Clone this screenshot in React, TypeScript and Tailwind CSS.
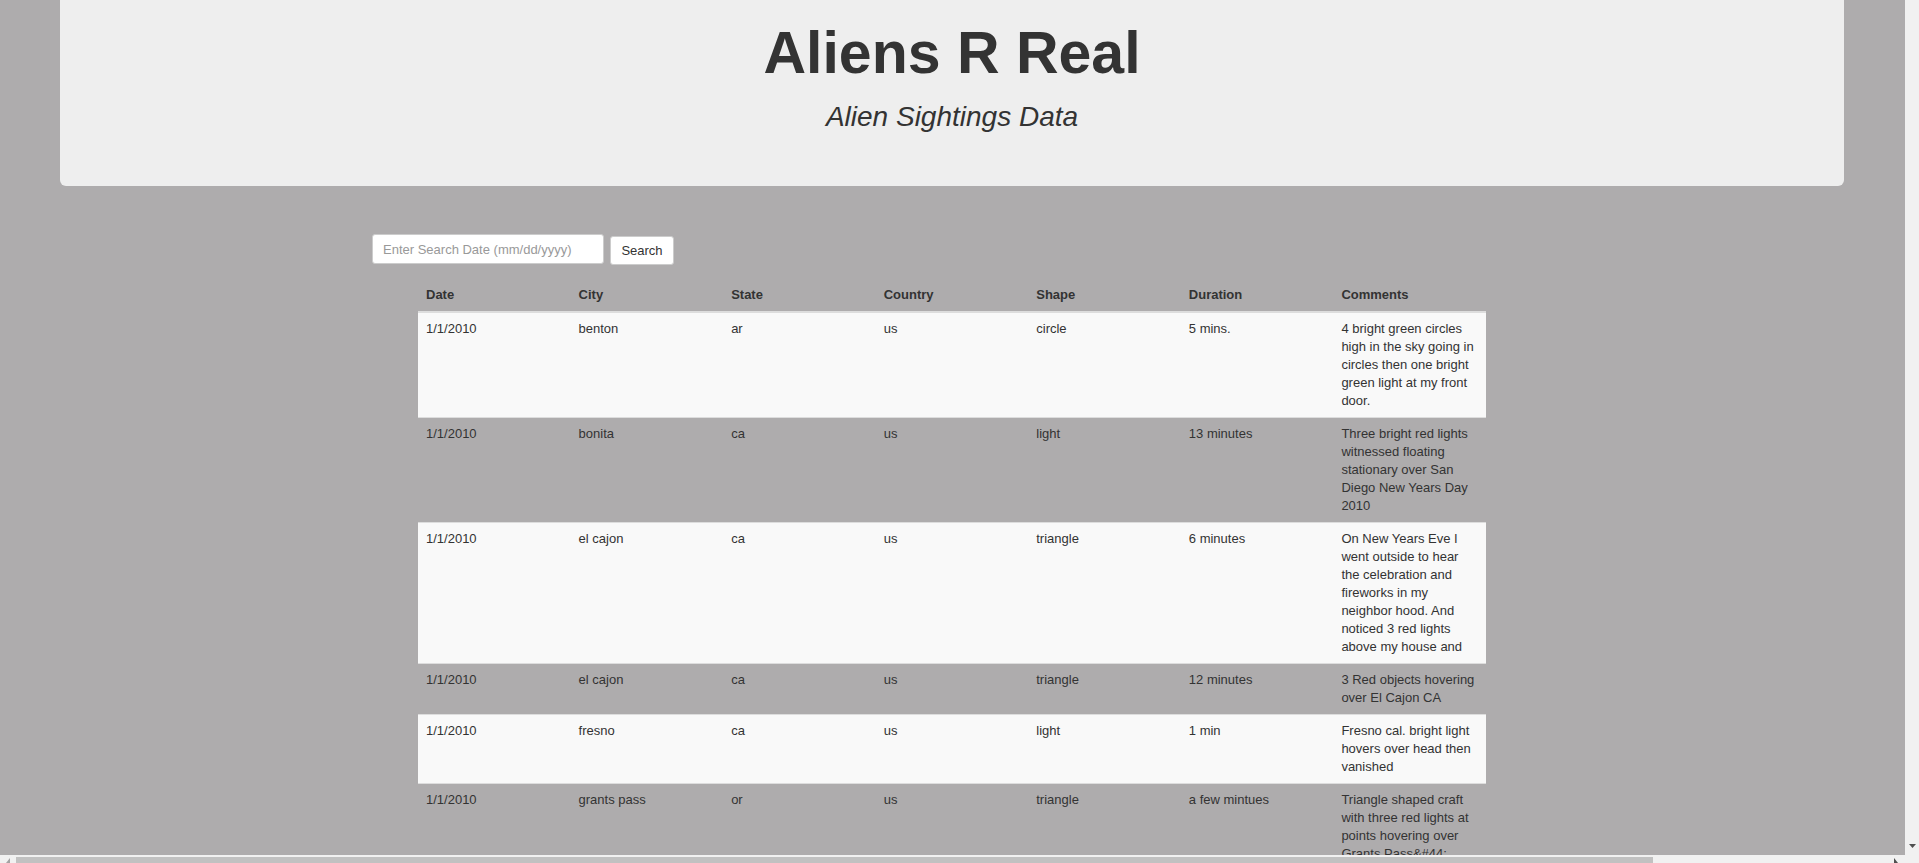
import React from "react";

type Sighting = {
  date: string;
  city: string;
  state: string;
  country: string;
  shape: string;
  duration: string;
  comments: string;
};

const sightings: Sighting[] = [
  {
    date: "1/1/2010",
    city: "benton",
    state: "ar",
    country: "us",
    shape: "circle",
    duration: "5 mins.",
    comments:
      "4 bright green circles high in the sky going in circles then one bright green light at my front door.",
  },
  {
    date: "1/1/2010",
    city: "bonita",
    state: "ca",
    country: "us",
    shape: "light",
    duration: "13 minutes",
    comments:
      "Three bright red lights witnessed floating stationary over San Diego New Years Day 2010",
  },
  {
    date: "1/1/2010",
    city: "el cajon",
    state: "ca",
    country: "us",
    shape: "triangle",
    duration: "6 minutes",
    comments:
      "On New Years Eve I went outside to hear the celebration and fireworks in my neighbor hood. And noticed 3 red lights above my house and",
  },
  {
    date: "1/1/2010",
    city: "el cajon",
    state: "ca",
    country: "us",
    shape: "triangle",
    duration: "12 minutes",
    comments: "3 Red objects hovering over El Cajon CA",
  },
  {
    date: "1/1/2010",
    city: "fresno",
    state: "ca",
    country: "us",
    shape: "light",
    duration: "1 min",
    comments: "Fresno cal. bright light hovers over head then vanished",
  },
  {
    date: "1/1/2010",
    city: "grants pass",
    state: "or",
    country: "us",
    shape: "triangle",
    duration: "a few mintues",
    comments:
      "Triangle shaped craft with three red lights at points hovering over Grants Pass&#44;",
  },
];

const headers = ["Date", "City", "State", "Country", "Shape", "Duration", "Comments"];

export default function App() {
  return (
    <div className="w-[1919px] h-[863px] overflow-hidden flex flex-col font-['Liberation_Sans',Arial,sans-serif] text-[#333]">
      <div className="flex h-[855px]">
        {/* Page */}
        <div className="flex-1 overflow-hidden bg-[#aeacad]">
          {/* Jumbotron */}
          <div className="ml-[60px] w-[1784px] bg-[#eeeeee] rounded-b-[6px] pt-[20px] pb-[54px] flex flex-col items-center gap-[15px]">
            <h1 className="text-[59px] leading-[66px] font-bold">Aliens R Real</h1>
            <h3 className="text-[28px] leading-[31px] italic">Alien Sightings Data</h3>
          </div>

          {/* Search form */}
          <div className="mt-[48px] ml-[372px] flex items-start gap-[6px] h-[31px]">
            <input
              type="text"
              placeholder="Enter Search Date (mm/dd/yyyy)"
              className="w-[232px] h-[30px] bg-white border border-[#ccc] rounded-[3px] px-[10px] text-[13px] placeholder:text-[#999] outline-none"
            />
            <button className="mt-[2px] w-[64px] h-[29px] bg-white border border-[#ccc] rounded-[3px] text-[13px] text-[#333]">
              Search
            </button>
          </div>

          {/* Table */}
          <table className="mt-[14px] ml-[418px] w-[1068px] table-fixed border-collapse text-[13px] leading-[18px]">
            <thead>
              <tr>
                {headers.map((h) => (
                  <th
                    key={h}
                    className="text-left font-bold px-[8px] py-[7px] border-b-2 border-[#ddd]"
                  >
                    {h}
                  </th>
                ))}
              </tr>
            </thead>
            <tbody>
              {sightings.map((s, i) => (
                <tr key={i} className={i % 2 === 0 ? "bg-[#f9f9f9]" : ""}>
                  {[s.date, s.city, s.state, s.country, s.shape, s.duration, s.comments].map(
                    (v, j) => (
                      <td
                        key={j}
                        className="align-top px-[8px] py-[7px] border-t border-[#ddd]"
                      >
                        {v}
                      </td>
                    )
                  )}
                </tr>
              ))}
            </tbody>
          </table>
        </div>

        {/* Vertical scrollbar */}
        <div className="w-[14px] bg-[#f1f1f1] flex flex-col justify-end items-center pb-[7px]">
          <svg width="7" height="4" viewBox="0 0 7 4">
            <path d="M0 0h7L3.5 4z" fill="#505050" />
          </svg>
        </div>
      </div>

      {/* Horizontal scrollbar */}
      <div className="h-[8px] flex bg-[#f1f1f1]">
        <div className="w-[1905px] flex items-end">
          <div className="w-[16px] h-full flex items-end justify-center">
            <svg width="4" height="5" viewBox="0 0 4 5">
              <path d="M4 0v5L0 5z" fill="#a3a3a3" />
            </svg>
          </div>
          <div className="w-[1637px] h-[6px] bg-[#c1c1c1]" />
          <div className="flex-1 h-full flex items-end justify-end pr-[7px]">
            <svg width="4" height="5" viewBox="0 0 4 5">
              <path d="M0 0l4 5H0z" fill="#505050" />
            </svg>
          </div>
        </div>
        <div className="flex-1" />
      </div>
    </div>
  );
}
